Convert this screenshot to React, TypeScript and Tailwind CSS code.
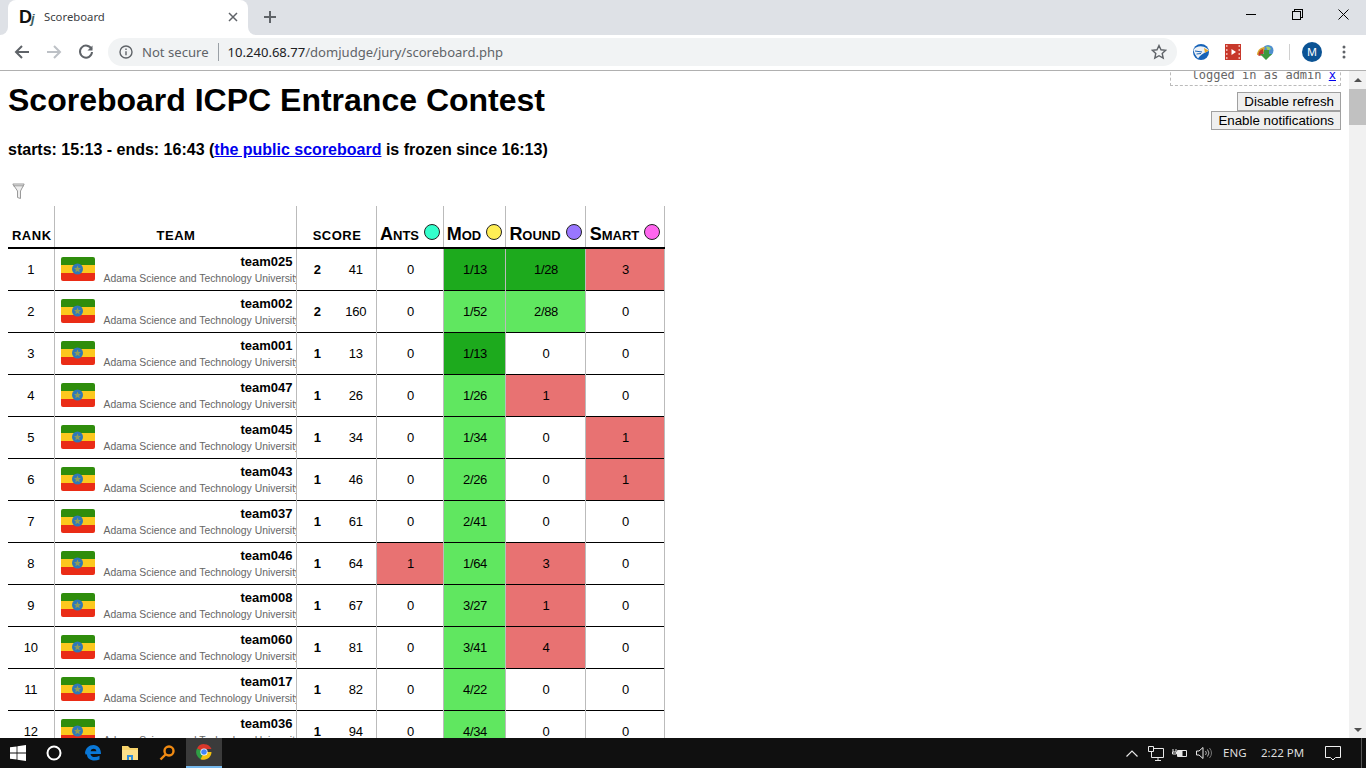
import { ReactNode } from 'react'

type Cell = { text: string; kind?: 'first' | 'correct' | 'wrong' }
type Row = { rank: number; team: string; solved: number; time: number; cells: Cell[] }

const Z: Cell = { text: '0' }
const first = (text: string): Cell => ({ text, kind: 'first' })
const ok = (text: string): Cell => ({ text, kind: 'correct' })
const bad = (text: string): Cell => ({ text, kind: 'wrong' })

const rows: Row[] = [
  { rank: 1, team: 'team025', solved: 2, time: 41, cells: [Z, first('1/13'), first('1/28'), bad('3')] },
  { rank: 2, team: 'team002', solved: 2, time: 160, cells: [Z, ok('1/52'), ok('2/88'), Z] },
  { rank: 3, team: 'team001', solved: 1, time: 13, cells: [Z, first('1/13'), Z, Z] },
  { rank: 4, team: 'team047', solved: 1, time: 26, cells: [Z, ok('1/26'), bad('1'), Z] },
  { rank: 5, team: 'team045', solved: 1, time: 34, cells: [Z, ok('1/34'), Z, bad('1')] },
  { rank: 6, team: 'team043', solved: 1, time: 46, cells: [Z, ok('2/26'), Z, bad('1')] },
  { rank: 7, team: 'team037', solved: 1, time: 61, cells: [Z, ok('2/41'), Z, Z] },
  { rank: 8, team: 'team046', solved: 1, time: 64, cells: [bad('1'), ok('1/64'), bad('3'), Z] },
  { rank: 9, team: 'team008', solved: 1, time: 67, cells: [Z, ok('3/27'), bad('1'), Z] },
  { rank: 10, team: 'team060', solved: 1, time: 81, cells: [Z, ok('3/41'), bad('4'), Z] },
  { rank: 11, team: 'team017', solved: 1, time: 82, cells: [Z, ok('4/22'), Z, Z] },
  { rank: 12, team: 'team036', solved: 1, time: 94, cells: [Z, ok('4/34'), Z, Z] },
]

function Flag() {
  return (
    <svg width="34" height="24" viewBox="0 0 34 24" className="shrink-0">
      <defs>
        <clipPath id="flagclip">
          <rect width="34" height="24" rx="2" />
        </clipPath>
      </defs>
      <g clipPath="url(#flagclip)">
        <rect width="34" height="8" fill="#2f8d0c" />
        <rect y="8" width="34" height="8" fill="#fcc81e" />
        <rect y="16" width="34" height="8" fill="#ea2c16" />
      </g>
      <circle cx="16.5" cy="12" r="5.5" fill="#2f78b8" />
      <path d="M16.5 8.500l1 2.400 2.500.2-1.900 1.600.6 2.500-2.200-1.300-2.200 1.300.6-2.500-1.900-1.600 2.500-.2z" fill="#8f9c58" />
    </svg>
  )
}

function ProblemHeader({ name, color }: { name: string; color: string }) {
  return (
    <th className="border-x border-[#bbbbbb] border-b-2 border-b-black p-0 pl-[1px] align-bottom">
      <div className="flex h-[24px] items-center justify-center gap-[5px] whitespace-nowrap pb-[2px] text-[18px] font-bold leading-none [font-variant:small-caps]">
        <span>{name}</span>
        <span className={`mb-[5px] h-[16px] w-[16px] rounded-full border border-[#222222] ${color}`} />
      </div>
    </th>
  )
}

function ScoreRow({ row }: { row: Row }) {
  return (
    <tr className="h-[42px] border-b border-black">
      <td className="border-r border-[#bbbbbb] p-0 text-center text-[13px] tracking-[-0.3px]">{row.rank}</td>
      <td className="border-x border-[#bbbbbb] p-0">
        <div className="flex h-[41px] items-start overflow-hidden pl-[6px] pt-[8px]">
          <Flag />
          <div className="ml-[9px] min-w-0 flex-1 -mt-[4px]">
            <div className="pr-[3px] text-right text-[13px] font-bold leading-[17px]">{row.team}</div>
            <div className="whitespace-nowrap pt-[2px] text-[10.4px] leading-[14px] text-[#666666]">
              Adama Science and Technology University
            </div>
          </div>
        </div>
      </td>
      <td className="border-l border-[#bbbbbb] p-0 pl-[2px] text-center text-[13px] font-bold">{row.solved}</td>
      <td className="border-r border-[#bbbbbb] p-0 text-center text-[13px] tracking-[-0.3px]">{row.time}</td>
      {row.cells.map((c, i) => (
        <td
          key={i}
          className={`border-x border-[#bbbbbb] p-0 pl-[2px] text-center text-[13px] tracking-[-0.3px] ${
            c.kind === 'first'
              ? 'bg-[#1daa1d]'
              : c.kind === 'correct'
                ? 'bg-[#60e760]'
                : c.kind === 'wrong'
                  ? 'bg-[#e87272]'
                  : ''
          }`}
        >
          {c.text}
        </td>
      ))}
    </tr>
  )
}

function Scoreboard() {
  return (
    <table className="ml-[8px] mt-[7px] w-[656px] table-fixed border-collapse">
      <colgroup>
        <col className="w-[46px]" />
        <col className="w-[242px]" />
        <col className="w-[40px]" />
        <col className="w-[40px]" />
        <col className="w-[67px]" />
        <col className="w-[62px]" />
        <col className="w-[80px]" />
        <col className="w-[79px]" />
      </colgroup>
      <thead>
        <tr className="h-[42px]">
          <th className="border-r border-[#bbbbbb] border-b-2 border-b-black p-0 pb-[4px] pl-[2px] align-bottom text-[13px] font-bold leading-[15px] tracking-[0.5px]">
            RANK
          </th>
          <th className="border-x border-[#bbbbbb] border-b-2 border-b-black p-0 pb-[4px] pl-[2px] align-bottom text-[13px] font-bold leading-[15px] tracking-[0.5px]">
            TEAM
          </th>
          <th
            colSpan={2}
            className="border-x border-[#bbbbbb] border-b-2 border-b-black p-0 pb-[4px] pl-[2px] align-bottom text-[13px] font-bold leading-[15px] tracking-[0.5px]"
          >
            SCORE
          </th>
          <ProblemHeader name="Ants" color="bg-[#33ffcc]" />
          <ProblemHeader name="Mod" color="bg-[#ffee55]" />
          <ProblemHeader name="Round" color="bg-[#9977ff]" />
          <ProblemHeader name="Smart" color="bg-[#ff66ee]" />
        </tr>
      </thead>
      <tbody>
        {rows.map(r => (
          <ScoreRow key={r.rank} row={r} />
        ))}
      </tbody>
    </table>
  )
}

function TabStrip() {
  return (
    <div className="flex h-[35px] shrink-0 bg-[#dee1e6] pl-[8px]">
      <div className="relative flex h-[35px] w-[240px] items-center rounded-t-[8px] bg-white pb-[1px] pl-[11px] pr-[10px]">
        <div className="absolute -left-[8px] bottom-0 h-[8px] w-[8px] bg-white">
          <div className="h-full w-full rounded-br-[8px] bg-[#dee1e6]" />
        </div>
        <div className="absolute -right-[8px] bottom-0 h-[8px] w-[8px] bg-white">
          <div className="h-full w-full rounded-bl-[8px] bg-[#dee1e6]" />
        </div>
        <span className="w-[25px] whitespace-nowrap font-['Liberation_Sans'] text-[18px] font-bold leading-none text-[#111111]">
          D<i className="-ml-[1px] text-[13px] text-[#3f5f5f]">j</i>
        </span>
        <span className="text-[11.3px] text-[#3c4043]">Scoreboard</span>
        <svg width="10" height="10" viewBox="0 0 10 10" className="ml-auto" stroke="#5f6368" strokeWidth="1.5">
          <path d="M1 1l8 8M9 1l-8 8" />
        </svg>
      </div>
      <svg width="14" height="14" viewBox="0 0 14 14" className="ml-[15px] mt-[10px]" stroke="#5f6368" strokeWidth="2">
        <path d="M7 1v12M1 7h12" />
      </svg>
      <div className="ml-auto flex text-black">
        <div className="flex h-[29px] w-[46px] items-center justify-center">
          <div className="h-px w-[10px] bg-black" />
        </div>
        <div className="flex h-[29px] w-[46px] items-center justify-center">
          <svg width="11" height="11" viewBox="0 0 11 11" fill="none" stroke="#000" shapeRendering="crispEdges">
            <path d="M.5 2.500h8v8h-8zM2.500 2.500v-2h8v8h-2" />
          </svg>
        </div>
        <div className="flex h-[29px] w-[46px] items-center justify-center">
          <svg width="11" height="11" viewBox="0 0 11 11" stroke="#000">
            <path d="M.5.5l10 10M10.500.5l-10 10" />
          </svg>
        </div>
      </div>
    </div>
  )
}

function NavButton({ children }: { children: ReactNode }) {
  return <div className="flex w-[32px] items-center justify-center">{children}</div>
}

function Toolbar() {
  return (
    <div className="flex h-[36px] shrink-0 items-center border-b border-[#b0b0b0] bg-white pb-[1px] pl-[6px]">
      <NavButton>
        <svg width="16" height="16" viewBox="0 0 16 16" fill="none" stroke="#5f6368" strokeWidth="2">
          <path d="M15 8H2M8 2L2 8l6 6" />
        </svg>
      </NavButton>
      <NavButton>
        <svg width="16" height="16" viewBox="0 0 16 16" fill="none" stroke="#bdc1c6" strokeWidth="2">
          <path d="M1 8h13M8 2l6 6-6 6" />
        </svg>
      </NavButton>
      <NavButton>
        <svg width="16" height="16" viewBox="0 0 16 16" fill="none" stroke="#5f6368" strokeWidth="2">
          <path d="M13.500 5.200A6 6 0 1 0 14 8" />
          <path d="M14.500 1.500v5h-5" fill="#5f6368" stroke="none" />
        </svg>
      </NavButton>
      <div className="ml-[6px] flex h-[28px] w-[1069px] items-center rounded-full bg-[#f1f3f4] pl-[11px] pr-[10px]">
        <svg width="14" height="14" viewBox="0 0 14 14" fill="none" stroke="#5f6368" strokeWidth="1.4">
          <circle cx="7" cy="7" r="6" />
          <path d="M7 6.200v4M7 3.500v1.400" />
        </svg>
        <span className="ml-[9px] pt-[2px] text-[13.1px] text-[#5f6368]">Not secure</span>
        <span className="ml-[9px] h-[18px] w-px bg-[#9aa0a6]" />
        <span className="ml-[9px] pt-[2px] text-[13.05px] text-[#202124]">
          10.240.68.77<span className="text-[#5f6368]">/domjudge/jury/scoreboard.php</span>
        </span>
        <svg width="16" height="16" viewBox="0 0 16 16" className="ml-auto" fill="none" stroke="#5f6368" strokeWidth="1.4">
          <path d="M8 1.500l2 4.300 4.700.5-3.500 3.200 1 4.600L8 11.700l-4.200 2.400 1-4.600-3.500-3.200 4.700-.5z" />
        </svg>
      </div>
      <div className="ml-[16px] flex items-center">
        <svg width="16" height="16" viewBox="0 0 16 16">
          <circle cx="8" cy="8" r="8" fill="#1763b8" />
          <path d="M.5 6C3 2 9 1 14 4.500c1 .7 1.500 1.500 1.500 2.500L12 8.500c-3 1.500-5 3-7 6C3 12 1 9 .5 6z" fill="#eef2f6" />
          <path d="M2 7l7 1M3.500 10L8 9.500" stroke="#1763b8" strokeWidth="1" />
          <path d="M11 4l4.500 2.500L12 9z" fill="#e8a82a" />
        </svg>
        <svg width="16" height="16" viewBox="0 0 16 16" className="ml-[16px]">
          <rect width="16" height="16" fill="#c8382b" />
          <path d="M6.500 5v6L11 8z" fill="#fff" />
          <path d="M1 1h1.500v2H1zM1 5h1.500v2H1zM1 9h1.500v2H1zM1 13h1.500v2H1zM13.500 1H15v2h-1.500zM13.500 5H15v2h-1.500zM13.500 9H15v2h-1.500zM13.500 13H15v2h-1.500z" fill="#f0b0a8" />
        </svg>
        <svg width="17" height="16" viewBox="0 0 17 16" className="ml-[16px]">
          <circle cx="11" cy="6.500" r="5.500" fill="#4f8fcf" />
          <path d="M9 3c2-1 4 0 5 2l-3 2z" fill="#9fcf6a" />
          <path d="M0 11c0-4 3-8 8-8l-2 7z" fill="#d9a72e" />
          <path d="M1.500 12c-.5-3 1-6 4.500-7l.5 6z" fill="#c0392b" />
          <path d="M7 6h5v4h3l-6 6-6-6h4z" fill="#3d9a3d" />
        </svg>
        <span className="ml-[15px] h-[16px] w-px bg-[#d0d0d0]" />
        <div className="ml-[12px] flex h-[20px] w-[20px] items-center justify-center rounded-full bg-[#0b5394] text-[11px] text-white">
          M
        </div>
        <svg width="4" height="14" viewBox="0 0 4 14" className="ml-[20px]" fill="#5f6368">
          <circle cx="2" cy="2" r="1.5" />
          <circle cx="2" cy="7" r="1.5" />
          <circle cx="2" cy="12" r="1.5" />
        </svg>
      </div>
    </div>
  )
}

function Scrollbar() {
  return (
    <div className="flex w-[17px] shrink-0 flex-col bg-[#f1f1f1]">
      <div className="flex h-[18px] items-center justify-center">
        <div className="h-0 w-0 border-x-[4px] border-b-[4px] border-x-transparent border-b-[#505050]" />
      </div>
      <div className="h-[36px] bg-[#c1c1c1]" />
      <div className="flex-1" />
      <div className="flex h-[17px] items-center justify-center">
        <div className="h-0 w-0 border-x-[4px] border-t-[4px] border-x-transparent border-t-[#505050]" />
      </div>
    </div>
  )
}

function Page() {
  return (
    <div className="relative min-w-0 flex-1 overflow-hidden font-['Liberation_Sans'] text-black">
      <div className="absolute right-[8px] top-0 flex flex-col items-end">
        <div className="-mt-[4px] w-[171px] border border-t-0 border-dashed border-[#bbbbbb] pb-[4px] pr-[4px] pt-[2px] text-right font-['DejaVu_Sans_Mono'] text-[12px] leading-[12px] text-[#666666]">
          logged in as admin <span className="text-[#0000ee] underline">x</span>
        </div>
        <button className="mt-[6px] h-[19px] border border-[#a0a0a0] bg-[#efefef] px-[6px] text-[13.33px] leading-none">
          Disable refresh
        </button>
        <button className="h-[19px] border border-[#a0a0a0] bg-[#efefef] px-[6px] text-[13.33px] leading-none">
          Enable notifications
        </button>
      </div>
      <h1 className="ml-[8px] mt-[11px] text-[32px] font-bold leading-[37px]">Scoreboard ICPC Entrance Contest</h1>
      <h2 className="ml-[8px] mt-[22px] text-[16px] font-bold leading-[18px]">
        starts: 15:13 - ends: 16:43 (<span className="text-[#0000ee] underline">the public scoreboard</span> is frozen
        since 16:13)
      </h2>
      <svg width="14" height="16" viewBox="0 0 14 16" className="ml-[12px] mt-[24px]" fill="none" stroke="#9a9a9a">
        <path d="M.8 1h11.400L8.500 8v7.500l-3-1V8z" fill="#eeeeee" />
        <path d="M1 2.800h11" />
      </svg>
      <Scoreboard />
    </div>
  )
}

function Taskbar() {
  return (
    <div className="flex h-[30px] shrink-0 items-center bg-[#101010] font-['Noto_Sans'] text-[11.5px] text-[#dddddd]">
      <svg width="16" height="16" viewBox="0 0 16 16" className="ml-[10px]" fill="#fff">
        <path d="M0 2.300l6.600-.9v6.200H0zM7.400 1.300L16 0v7.600H7.400zM0 8.400h6.600v6.200L0 13.700zM7.400 8.400H16V16l-8.600-1.300z" />
      </svg>
      <svg width="16" height="16" viewBox="0 0 16 16" className="ml-[20px]" fill="none" stroke="#fff" strokeWidth="2">
        <circle cx="8" cy="8" r="6.500" />
      </svg>
      <svg width="18" height="18" viewBox="0 0 18 18" className="ml-[22px]">
        <path
          d="M1 9C1.500 4 5 1 9.500 1 14 1 17 4.500 17 10H6.500c.3 3.500 5 4 9 1.800v3.600C10 18 2.500 16 3 10c-.6 1-1 1.500-2-1zM6.600 7.300h5.800C12.300 4 7 4 6.600 7.300z"
          fill="#0a78d7"
          fillRule="evenodd"
        />
      </svg>
      <svg width="18" height="16" viewBox="0 0 18 16" className="ml-[19px]">
        <path d="M1 1h6l2 2h8v12H1z" fill="#f6d36b" />
        <path d="M1 5h16v10H1z" fill="#fbe08b" />
        <path d="M6 15v-5h6v5h-2v-3H8v3z" fill="#2f8fdc" />
      </svg>
      <svg width="16" height="16" viewBox="0 0 16 16" className="ml-[20px]" fill="none" stroke="#f08a12" strokeWidth="2.4">
        <circle cx="10" cy="6" r="4.500" />
        <path d="M6.500 9.500L1.500 14.500" />
      </svg>
      <div className="ml-[11px] flex h-[30px] w-[36px] items-center justify-center border-b-[2px] border-[#76b9ed] bg-[#3b3b3b]">
        <svg width="16" height="16" viewBox="0 0 16 16">
          <path d="M8 8L1 4.500A8 8 0 0 1 15.500 5H8z" fill="#d8372b" />
          <path d="M8 8l-3.500 7.200A8 8 0 0 1 1 4.500z" fill="#2f9e44" />
          <path d="M8 8h7.500A8 8 0 0 1 4.500 15.200z" fill="#f4c20d" />
          <circle cx="8" cy="8" r="3.600" fill="#fff" />
          <circle cx="8" cy="8" r="2.800" fill="#4285f4" />
        </svg>
      </div>
      <div className="ml-auto flex items-center whitespace-nowrap">
        <svg width="12" height="7" viewBox="0 0 12 7" fill="none" stroke="#e8e8e8" strokeWidth="1.2">
          <path d="M.5 6.500L6 1l5.500 5.500" />
        </svg>
        <svg width="16" height="16" viewBox="0 0 16 16" className="ml-[10px]" fill="none" stroke="#e8e8e8">
          <path d="M3.500 3.500h12v9h-12zM7 15.500h6M10 12.500v3" />
          <path d="M.5 1.500h5v5h-5z" fill="#101010" />
        </svg>
        <svg width="16" height="10" viewBox="0 0 16 10" className="ml-[8px]" fill="none" stroke="#e8e8e8">
          <path d="M5.500 2.500h9v6h-9z" />
          <path d="M6 3h4v5H6z" fill="#e8e8e8" />
          <path d="M1 1v3M4 1v3M.5 4h4v2h-4z" />
        </svg>
        <svg width="16" height="14" viewBox="0 0 16 14" className="ml-[8px]" fill="none" stroke="#e8e8e8">
          <path d="M.5 5h2.500L7 1.500v11L3 9H.5z" />
          <path d="M9.500 5a3 3 0 0 1 0 4M11.500 3.500a5.500 5.500 0 0 1 0 7" stroke="#b0b0b0" />
          <path d="M13.500 2a8 8 0 0 1 0 10" stroke="#777777" />
        </svg>
        <span className="ml-[11px] w-[22px]">ENG</span>
        <span className="ml-[16px] w-[42px]">2:22 PM</span>
        <svg width="16" height="16" viewBox="0 0 16 16" className="ml-[22px]" fill="none" stroke="#f0f0f0">
          <path d="M.5 1.500h15v11h-5L8 15l-2.500-2.500h-5z" />
        </svg>
        <div className="ml-[20px] h-[30px] w-px bg-[#555555]" />
        <div className="w-[4px]" />
      </div>
    </div>
  )
}

export default function App() {
  return (
    <div className="flex h-[768px] w-[1366px] flex-col overflow-hidden bg-white font-['Noto_Sans',sans-serif]">
      <TabStrip />
      <Toolbar />
      <div className="flex min-h-0 flex-1">
        <Page />
        <Scrollbar />
      </div>
      <Taskbar />
    </div>
  )
}
